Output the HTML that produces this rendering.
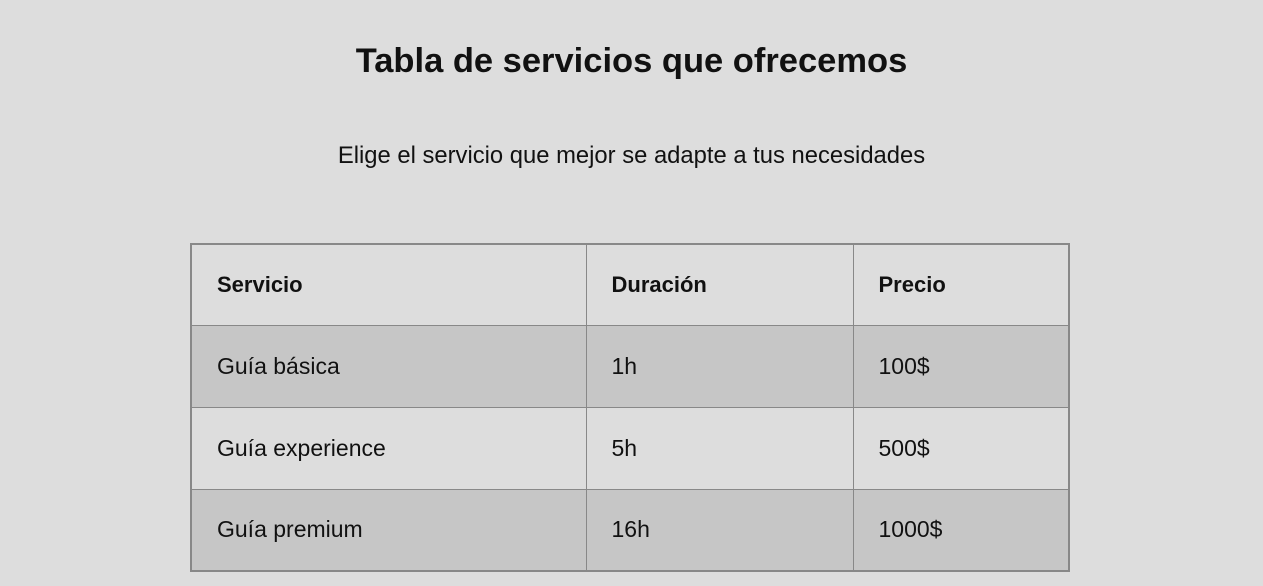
<!DOCTYPE html>
<html><head><meta charset="utf-8"><style>
html,body{margin:0;padding:0;background:#dddddd;width:1263px;height:586px;overflow:hidden;font-family:"Liberation Sans",sans-serif;color:#111}
h1{position:absolute;top:39px;left:0;width:1263px;text-align:center;margin:0;font-size:34.5px;font-weight:bold;line-height:44px}
p{position:absolute;top:142px;left:0;width:1263px;text-align:center;margin:0;font-size:23.8px;line-height:28px}
table{position:absolute;left:190px;top:243px;width:880px;border-collapse:collapse;border:2px solid #888}
td,th{border:1px solid #888;height:81.75px;padding:0 0 0 25px;text-align:left;font-size:23px;box-sizing:border-box}
th{font-weight:bold;font-size:22px}
tr.d td{background:#c6c6c6}
</style></head><body>
<h1>Tabla de servicios que ofrecemos</h1>
<p>Elige el servicio que mejor se adapte a tus necesidades</p>
<table>
<tr><th style="width:395px">Servicio</th><th style="width:267px">Duración</th><th>Precio</th></tr>
<tr class="d"><td>Guía básica</td><td>1h</td><td>100$</td></tr>
<tr><td>Guía experience</td><td>5h</td><td>500$</td></tr>
<tr class="d"><td>Guía premium</td><td>16h</td><td>1000$</td></tr>
</table>
</body></html>
